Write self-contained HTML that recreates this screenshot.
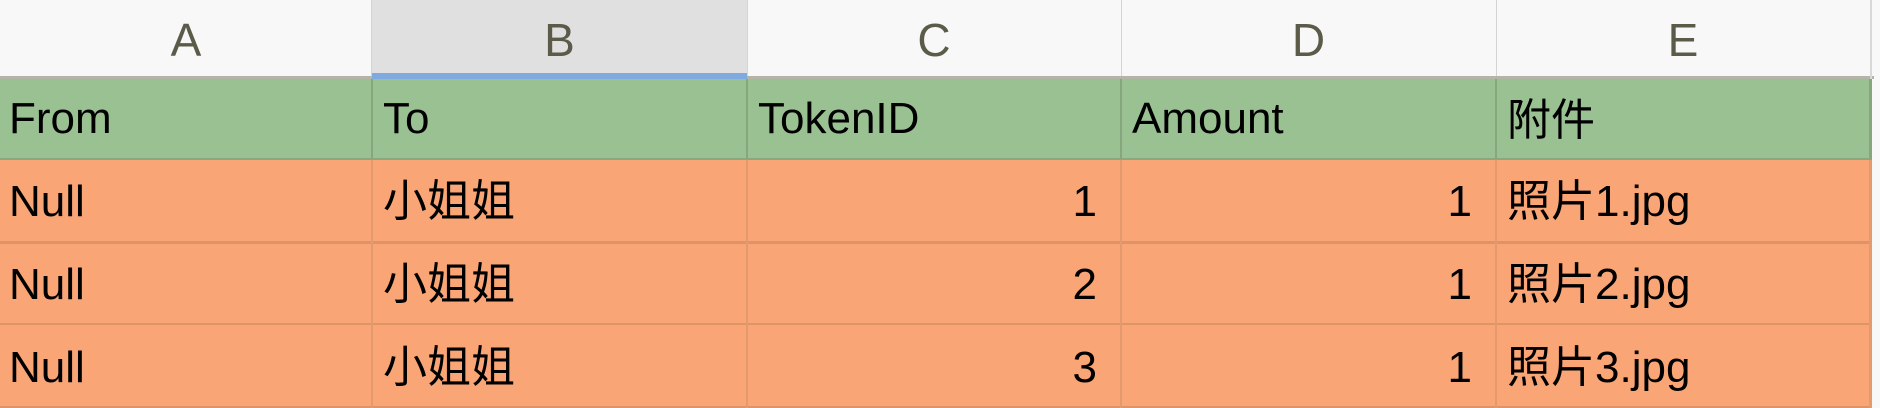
<!DOCTYPE html>
<html><head><meta charset="utf-8"><style>
html,body{margin:0;padding:0;}
body{width:1880px;height:408px;background:#f8f8f8;position:relative;overflow:hidden;font-family:"Liberation Sans","Noto Sans CJK SC",sans-serif;}
.d{position:absolute;}
.hl{position:absolute;top:0;height:73px;font-size:46px;color:#5c5a48;text-align:center;line-height:1;}
.t{position:absolute;font-size:44px;color:#000;white-space:nowrap;line-height:1;}
</style></head><body>
<div class="d" style="left:372px;top:0;width:375px;height:73px;background:#e0e0e0"></div>
<div class="d" style="left:372px;top:73px;width:375px;height:6px;background:#7ea9e1"></div>
<div class="d" style="left:0;top:76px;width:372px;height:3px;background:#b4b4a8"></div>
<div class="d" style="left:747px;top:76px;width:1127px;height:3px;background:#b4b4a8"></div>
<div class="d" style="left:371px;top:0;width:1px;height:76px;background:#d4d4d4"></div>
<div class="d" style="left:747px;top:0;width:1px;height:76px;background:#d4d4d4"></div>
<div class="d" style="left:1121px;top:0;width:1px;height:76px;background:#d4d4d4"></div>
<div class="d" style="left:1496px;top:0;width:1px;height:76px;background:#d4d4d4"></div>
<div class="d" style="left:1870px;top:0;width:2px;height:408px;background:#d8d8d8"></div>
<div class="hl" style="left:0;width:372px;"><span style="position:absolute;left:0;right:0;top:17px">A</span></div>
<div class="hl" style="left:372px;width:375px;"><span style="position:absolute;left:0;right:0;top:17px">B</span></div>
<div class="hl" style="left:747px;width:374px;"><span style="position:absolute;left:0;right:0;top:17px">C</span></div>
<div class="hl" style="left:1121px;width:375px;"><span style="position:absolute;left:0;right:0;top:17px">D</span></div>
<div class="hl" style="left:1496px;width:374px;"><span style="position:absolute;left:0;right:0;top:17px">E</span></div>
<div class="d" style="left:0;top:79px;width:1872px;height:80px;background:#9ac192"></div>
<div class="d" style="left:0;top:158px;width:1872px;height:2px;background:#8aa880"></div>
<div class="d" style="left:0;top:160px;width:1872px;height:248px;background:#f9a575"></div>
<div class="d" style="left:0;top:241px;width:1872px;height:3px;background:#df9468"></div>
<div class="d" style="left:0;top:323px;width:1872px;height:2px;background:#df9468"></div>
<div class="d" style="left:0;top:406px;width:1872px;height:2px;background:#df9468"></div>
<div class="d" style="left:371px;top:79px;width:2px;height:80px;background:#88a67e"></div>
<div class="d" style="left:746px;top:79px;width:2px;height:80px;background:#88a67e"></div>
<div class="d" style="left:1120px;top:79px;width:2px;height:80px;background:#88a67e"></div>
<div class="d" style="left:1495px;top:79px;width:2px;height:80px;background:#88a67e"></div>
<div class="d" style="left:1869px;top:79px;width:3px;height:80px;background:#88a67e"></div>
<div class="d" style="left:371px;top:160px;width:2px;height:248px;background:#e29a6e"></div>
<div class="d" style="left:746px;top:160px;width:2px;height:248px;background:#e29a6e"></div>
<div class="d" style="left:1120px;top:160px;width:2px;height:248px;background:#e29a6e"></div>
<div class="d" style="left:1495px;top:160px;width:2px;height:248px;background:#e29a6e"></div>
<div class="d" style="left:1869px;top:160px;width:3px;height:248px;background:#e29a6e"></div>
<div class="t" style="left:9px;top:97px">From</div>
<div class="t" style="left:383px;top:97px">To</div>
<div class="t" style="left:758px;top:97px">TokenID</div>
<div class="t" style="left:1132px;top:97px">Amount</div>
<div class="t" style="left:1507px;top:99px">附件</div>
<div class="t" style="left:9px;top:180px">Null</div>
<div class="t" style="left:9px;top:263px">Null</div>
<div class="t" style="left:9px;top:346px">Null</div>
<div class="t" style="left:383px;top:180px">小姐姐</div>
<div class="t" style="left:383px;top:263px">小姐姐</div>
<div class="t" style="left:383px;top:346px">小姐姐</div>
<div class="t" style="right:783px;top:180px">1</div>
<div class="t" style="right:783px;top:263px">2</div>
<div class="t" style="right:783px;top:346px">3</div>
<div class="t" style="right:408px;top:180px">1</div>
<div class="t" style="right:408px;top:263px">1</div>
<div class="t" style="right:408px;top:346px">1</div>
<div class="t" style="left:1507px;top:180px">照片1.jpg</div>
<div class="t" style="left:1507px;top:263px">照片2.jpg</div>
<div class="t" style="left:1507px;top:346px">照片3.jpg</div>
</body></html>
